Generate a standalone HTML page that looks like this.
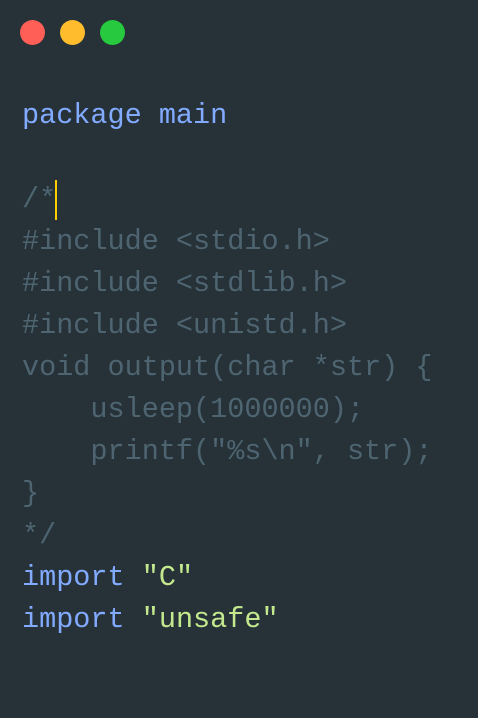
<!DOCTYPE html>
<html><head><style>
html,body{margin:0;padding:0;background:#263238;width:478px;height:718px;overflow:hidden}
.dot{position:absolute;top:20px;width:25px;height:25px;border-radius:50%}
pre{position:absolute;left:22px;top:95px;margin:0;font-family:"Liberation Mono",monospace;font-size:28.5px;line-height:42px;color:#4e6571;white-space:pre}
.k{color:#82aaff}.s{color:#c3e88d}
.cur{position:absolute;left:55px;top:180px;width:2px;height:40px;background:#ffcc00}
</style></head><body>
<div class="dot" style="left:20px;background:#ff5f56"></div>
<div class="dot" style="left:60px;background:#ffbd2e"></div>
<div class="dot" style="left:100px;background:#27c93f"></div>
<pre><span class="k">package main</span>

/*
#include &lt;stdio.h&gt;
#include &lt;stdlib.h&gt;
#include &lt;unistd.h&gt;
void output(char *str) {
    usleep(1000000);
    printf("%s\n", str);
}
*/
<span class="k">import</span> <span class="s">"C"</span>
<span class="k">import</span> <span class="s">"unsafe"</span></pre>
<div class="cur"></div>
</body></html>
